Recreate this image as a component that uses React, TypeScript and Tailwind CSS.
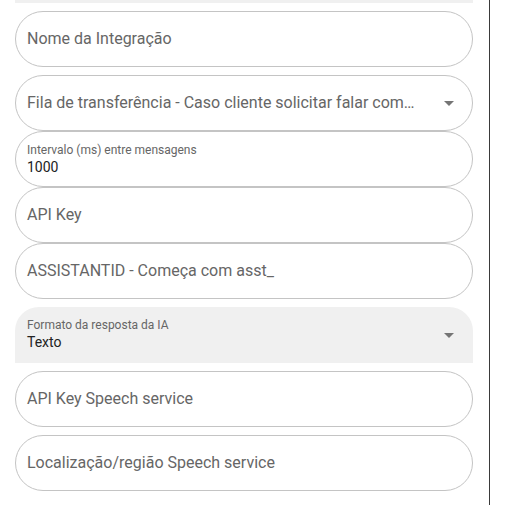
import React from "react";

const font = { fontFamily: "Roboto, 'Liberation Sans', sans-serif" };

function Arrow() {
  return (
    <svg width="10" height="5" viewBox="0 0 10 5" className="shrink-0">
      <path d="M0 0 L10 0 L5 5 Z" fill="#757575" />
    </svg>
  );
}

function Outlined({ text }: { text: string }) {
  return (
    <div className="h-[56px] rounded-full border border-[#c4c4c4] flex items-center pl-[11px] pr-4">
      <span className="text-[16px] text-[#666666] whitespace-nowrap">{text}</span>
    </div>
  );
}

export default function App() {
  return (
    <div className="w-[509px] h-[505px] bg-white flex" style={font}>
      <div className="w-[490px] h-full pl-[15px] pr-[16px] border-r border-[#3a3a3a] flex flex-col">
        <div className="h-[3px] bg-[#f0f0f0]" />
        <div className="mt-[8px]">
          <Outlined text="Nome da Integração" />
        </div>
        <div className="mt-[8px] h-[56px] rounded-full border border-[#c4c4c4] flex items-center pl-[11px] pr-[18px]">
          <span className="text-[16px] text-[#666666] whitespace-nowrap flex-1">
            Fila de transferência - Caso cliente solicitar falar com…
          </span>
          <Arrow />
        </div>
        <div className="h-[56px] rounded-full border border-[#c4c4c4] flex flex-col justify-center pl-[11px] pr-4">
          <span className="text-[12px] leading-[14px] text-[#666666]">Intervalo (ms) entre mensagens</span>
          <span className="text-[14px] leading-[18px] text-[#222222] mt-[1px]">1000</span>
        </div>
        <Outlined text="API Key" />
        <Outlined text="ASSISTANTID - Começa com asst_" />
        <div className="mt-[8px] h-[56px] rounded-t-[24px] bg-[#f0f0f0] flex items-center pl-[12px] pr-[19px]">
          <div className="flex-1 flex flex-col -mt-[2px]">
            <span className="text-[12px] leading-[14px] text-[#666666]">Formato da resposta da IA</span>
            <span className="text-[14px] leading-[18px] text-[#222222] mt-[1px]">Texto</span>
          </div>
          <Arrow />
        </div>
        <div className="mt-[8px]">
          <Outlined text="API Key Speech service" />
        </div>
        <div className="mt-[8px]">
          <Outlined text="Localização/região Speech service" />
        </div>
      </div>
    </div>
  );
}
